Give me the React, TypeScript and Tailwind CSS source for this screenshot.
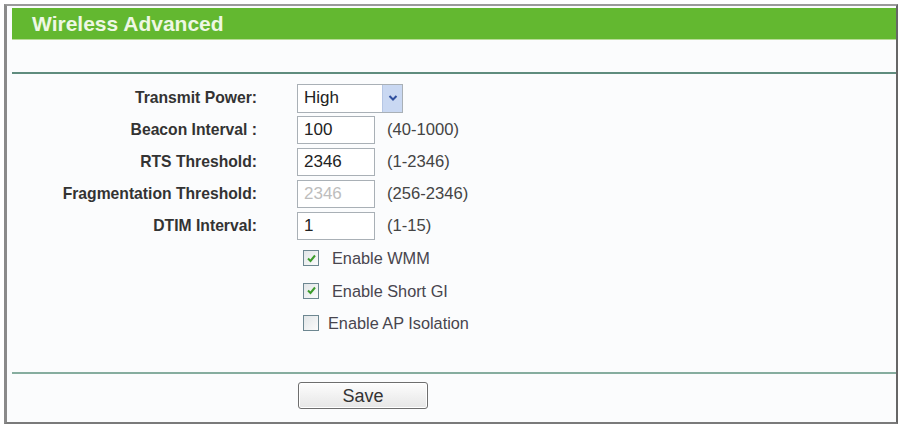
import { useState } from "react";

const font = { fontFamily: '"Liberation Sans", Arial, sans-serif' };

function Label({ children }: { children: React.ReactNode }) {
  return (
    <div className="w-[245px] shrink-0 text-right text-[15.7px] font-bold text-[#333]">
      {children}
    </div>
  );
}

function TextBox({ value, disabled }: { value: string; disabled?: boolean }) {
  return (
    <div
      className={`w-[78px] h-[28px] border border-[#a9b0b6] bg-white pl-[6px] flex items-center text-[17px] ${
        disabled ? "text-[#bdbdbd]" : "text-[#222]"
      }`}
    >
      {value}
    </div>
  );
}

function Check({ checked, label, onToggle }: { checked: boolean; label: string; onToggle: () => void }) {
  return (
    <div className="flex items-center h-[32.5px] pl-[291px]" onClick={onToggle}>
      <span className="w-[16px] h-[16px] border border-[#6d8791] bg-gradient-to-br from-[#e2e6e8] to-[#fbfbfb] flex items-center justify-center">
        {checked && (
          <svg width="11" height="11" viewBox="0 0 11 11">
            <path d="M2 5.5 L4.5 8 L9 2.5" fill="none" stroke="#3c9c2c" strokeWidth="2" />
          </svg>
        )}
      </span>
      <span className={`text-[16.3px] text-[#48454e] ${checked ? "ml-[13px]" : "ml-[9px]"}`}>{label}</span>
    </div>
  );
}

export default function App() {
  const [wmm, setWmm] = useState(true);
  const [gi, setGi] = useState(true);
  const [ap, setAp] = useState(false);

  return (
    <div className="w-[900px] h-[426px] bg-white pt-[4px] pl-[4px] pr-[2px]" style={font}>
      <div className="h-[420px] border-t-2 border-l-[3px] border-b-2 border-r-2 border-t-[#9a9a9a] border-l-[#8a8a8a] border-b-[#7a7a7a] border-r-[#666] bg-[#fbfcfd] pl-[5px] pt-[2px] flex flex-col">
        {/* header */}
        <div className="h-[32px] bg-[#63b830] flex items-center pl-[20px] border-b border-[#b8dc98]">
          <span className="text-[21px] font-bold text-[#eef7e4]">Wireless Advanced</span>
        </div>
        <div className="h-[32px]" />
        <div className="h-[2px] bg-[#5f8c7e]" />

        {/* settings */}
        <div className="pt-[8px] flex flex-col">
          <div className="flex items-center h-[32px]">
            <Label>Transmit Power:</Label>
            <div className="ml-[40px] w-[106px] h-[29px] border border-[#a9b0b6] bg-white flex items-stretch">
              <div className="flex-1 flex items-center pl-[6px] text-[17px] text-[#222]">High</div>
              <div className="w-[20px] bg-[#c9d8f2] border-l border-[#b5c6e4] flex items-center justify-center">
                <svg width="10" height="8" viewBox="0 0 10 8">
                  <path d="M1.5 2 L5 5.5 L8.5 2" fill="none" stroke="#2f4f9e" strokeWidth="2" />
                </svg>
              </div>
            </div>
          </div>
          {[
            ["Beacon Interval :", "100", "(40-1000)", false],
            ["RTS Threshold:", "2346", "(1-2346)", false],
            ["Fragmentation Threshold:", "2346", "(256-2346)", true],
            ["DTIM Interval:", "1", "(1-15)", false],
          ].map(([l, v, r, d]) => (
            <div key={l as string} className="flex items-center h-[32px]">
              <Label>{l as string}</Label>
              <div className="ml-[40px]">
                <TextBox value={v as string} disabled={d as boolean} />
              </div>
              <span className="ml-[12px] text-[16.6px] text-[#444]">{r as string}</span>
            </div>
          ))}
          <div>
            <Check checked={wmm} label="Enable WMM" onToggle={() => setWmm(!wmm)} />
            <Check checked={gi} label="Enable Short GI" onToggle={() => setGi(!gi)} />
            <Check checked={ap} label="Enable AP Isolation" onToggle={() => setAp(!ap)} />
          </div>
        </div>

        <div className="flex-1" />
        <div className="h-[2px] bg-[#86ad9f]" />
        <div className="h-[48px] pl-[286px] pt-[8px]">
          <button className="w-[130px] h-[27px] rounded-[3px] border border-[#6e6e6e] bg-gradient-to-b from-[#fdfdfd] to-[#e6e6e6] text-[18px] text-[#333] shadow-[inset_0_0_0_1px_#fff]">
            Save
          </button>
        </div>
      </div>
    </div>
  );
}
